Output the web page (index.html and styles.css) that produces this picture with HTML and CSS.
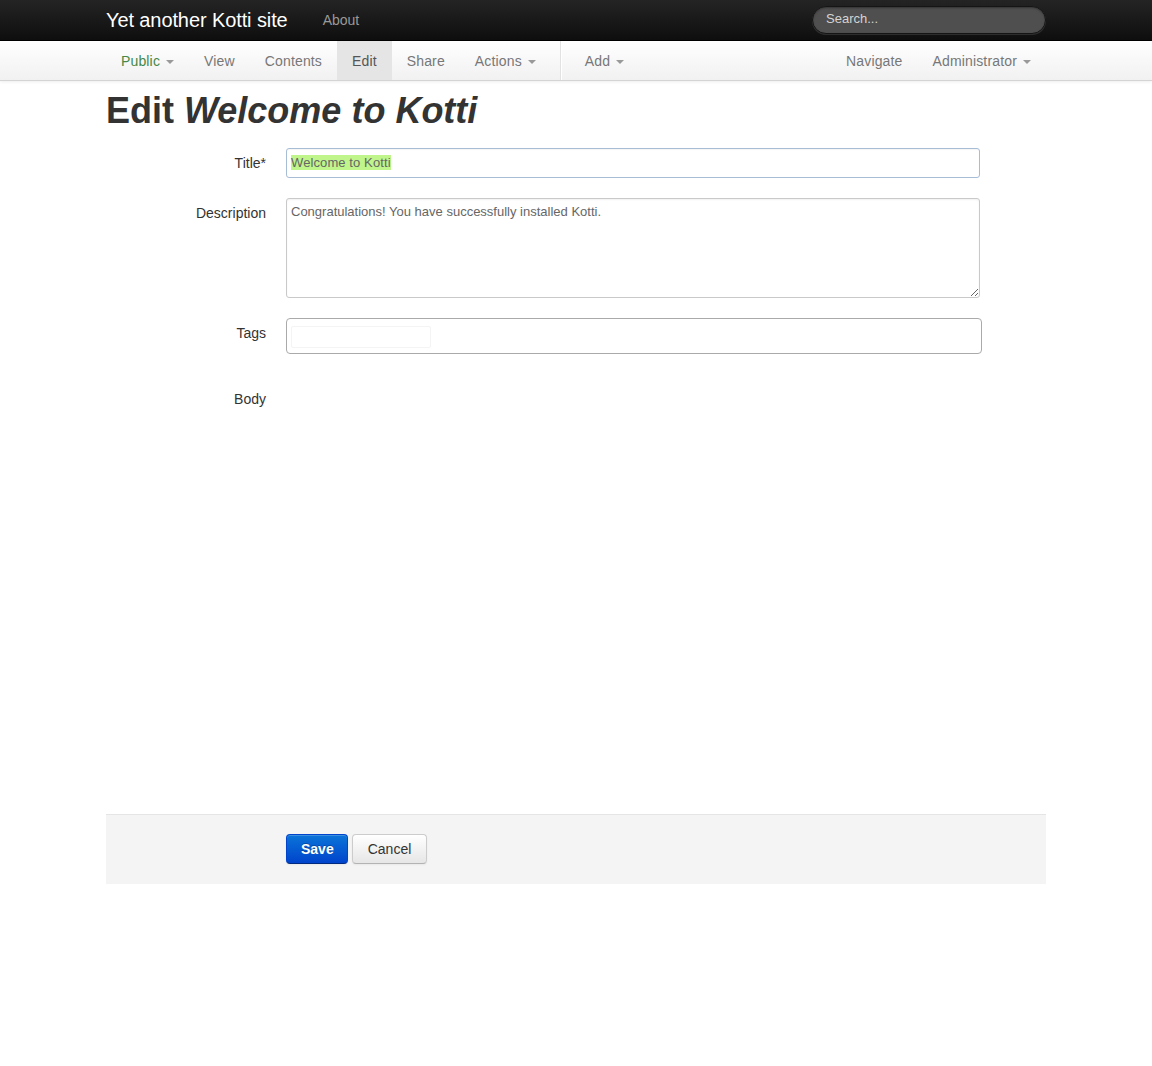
FILE: index.html
```html
<!DOCTYPE html>
<html lang="en">
<head>
<meta charset="utf-8">
<title>Edit Welcome to Kotti</title>
<link rel="stylesheet" href="styles.css">
</head>
<body>
<header class="navbar">
  <div class="container navbar-inner">
    <a class="brand" href="#">Yet another Kotti site</a>
    <ul class="nav">
      <li><a href="#">About</a></li>
    </ul>
    <form class="navbar-search">
      <input class="search-query" type="text" placeholder="Search...">
    </form>
  </div>
</header>

<nav class="subnav">
  <div class="container subnav-inner">
    <ul class="nav">
      <li><a class="state-public" href="#">Public <b class="caret"></b></a></li>
      <li><a href="#">View</a></li>
      <li><a href="#">Contents</a></li>
      <li class="active"><a href="#">Edit</a></li>
      <li><a href="#">Share</a></li>
      <li><a href="#">Actions <b class="caret"></b></a></li>
    </ul>
    <span class="divider-vertical"></span>
    <ul class="nav">
      <li><a href="#">Add <b class="caret"></b></a></li>
    </ul>
    <ul class="nav nav-right">
      <li><a href="#">Navigate</a></li>
      <li><a href="#">Administrator <b class="caret"></b></a></li>
    </ul>
  </div>
</nav>

<main class="container">
  <h1>Edit <em>Welcome to Kotti</em></h1>
  <form class="form-horizontal">
    <div class="control-group">
      <label class="control-label">Title*</label>
      <div class="controls">
        <div class="input title-input"><span class="selected">Welcome to Kotti</span></div>
      </div>
    </div>
    <div class="control-group">
      <label class="control-label">Description</label>
      <div class="controls">
        <textarea class="description" readonly>Congratulations! You have successfully installed Kotti.</textarea>
      </div>
    </div>
    <div class="control-group tags-group">
      <label class="control-label">Tags</label>
      <div class="controls">
        <div class="tagit"><span class="tagit-new"></span></div>
      </div>
    </div>
    <div class="control-group body-group">
      <label class="control-label">Body</label>
      <div class="controls"></div>
    </div>
    <div class="form-actions">
      <button type="button" class="btn btn-primary">Save</button>
      <button type="button" class="btn">Cancel</button>
    </div>
  </form>
</main>
</body>
</html>
```

FILE: styles.css
```css
* { box-sizing: border-box; }

html, body {
  margin: 0;
  padding: 0;
  background: #fff;
}

body {
  font-family: "Liberation Sans", Arial, Helvetica, sans-serif;
  font-size: 14px;
  line-height: 20px;
  color: #333;
}

a { text-decoration: none; }

.container {
  width: 940px;
  margin: 0 auto;
}

/* ---------- top navbar ---------- */
.navbar {
  height: 41px;
  background: linear-gradient(to bottom, #242424, #0e0e0e);
  border-bottom: 1px solid #000;
}

.navbar-inner {
  display: flex;
  align-items: flex-start;
  height: 40px;
}

.brand {
  display: block;
  margin-left: -20px;
  padding: 10px 20px;
  font-size: 20px;
  line-height: 20px;
  color: #fff;
  letter-spacing: -0.1px;
}

.nav {
  display: flex;
  list-style: none;
  margin: 0;
  padding: 0;
}

.nav a {
  display: block;
  padding: 10px 15px;
  line-height: 20px;
  font-size: 14px;
}

.navbar .nav a { color: #999; }

.navbar-search {
  margin: 6px 0 0 auto;
}

.search-query {
  display: block;
  width: 234px;
  height: 28px;
  padding: 2px 13px 6px;
  font-family: "Liberation Sans", Arial, sans-serif;
  font-size: 13px;
  line-height: 18px;
  color: #fff;
  background: #4f4f4f;
  border: 1px solid #151515;
  border-radius: 14px;
  box-shadow: inset 0 1px 2px rgba(0,0,0,.35), 0 1px 0 rgba(255,255,255,.12);
  outline: none;
}

.search-query::placeholder { color: #d4d4d4; }

/* ---------- sub navbar ---------- */
.subnav {
  height: 40px;
  background: linear-gradient(to bottom, #ffffff, #f1f1f1);
  border-bottom: 1px solid #d4d4d4;
  box-shadow: 0 1px 3px rgba(0,0,0,.07);
}

.subnav-inner {
  display: flex;
  height: 39px;
}

.subnav .nav a {
  color: #777;
  height: 39px;
  letter-spacing: 0.15px;
}

.subnav .nav .active a {
  background: #e5e5e5;
  color: #555;
}

.subnav .nav a.state-public { color: #468847; }

.nav-right { margin-left: auto; }

.divider-vertical {
  display: block;
  height: 39px;
  margin: 0 8px 0 9px;
  border-left: 1px solid #e2e2e2;
  border-right: 1px solid #fff;
}

.caret {
  display: inline-block;
  width: 0;
  height: 0;
  vertical-align: top;
  margin-top: 9px;
  margin-left: 2px;
  border-top: 4px solid #999;
  border-left: 4px solid transparent;
  border-right: 4px solid transparent;
}

/* ---------- heading ---------- */
h1 {
  margin: 10px 0 17px;
  font-size: 36px;
  line-height: 40px;
  font-weight: bold;
  color: #333;
}

h1 em { font-style: italic; }

/* ---------- form ---------- */
.form-horizontal { margin: 0; }

.control-group {
  display: grid;
  grid-template-columns: 160px 1fr;
  column-gap: 20px;
  margin-bottom: 20px;
}

.control-label {
  padding-top: 5px;
  text-align: right;
  font-size: 14px;
  line-height: 20px;
  color: #333;
}

.controls { min-width: 0; }

.input {
  width: 694px;
  height: 30px;
  padding: 4px 4px;
  font-size: 13px;
  line-height: 20px;
  color: #666;
  background: #fff;
  border-radius: 3px;
  letter-spacing: 0.1px;
}

.title-input {
  border: 1px solid #a7bdd6;
  box-shadow: inset 0 1px 1px rgba(0,0,0,.04);
}

.selected {
  background: #bff58b;
  color: #666;
}

.description {
  display: block;
  width: 694px;
  height: 100px;
  margin: 0;
  padding: 3px 4px 5px;
  font-family: "Liberation Sans", Arial, sans-serif;
  font-size: 13px;
  line-height: 20px;
  color: #666;
  border: 1px solid #c9c9c9;
  border-radius: 3px;
  box-shadow: inset 0 1px 2px rgba(0,0,0,.06);
  resize: vertical;
  outline: none;
}

.tags-group { margin-bottom: 30px; }

.tagit {
  width: 696px;
  height: 36px;
  padding: 7px 4px;
  background: #fff;
  border: 1px solid #aaa;
  border-radius: 4px;
}

.tagit-new {
  display: block;
  width: 140px;
  height: 22px;
  border: 1px solid #f4f4f4;
  border-radius: 2px;
}

.body-group { height: 410px; }

.form-actions {
  display: flex;
  gap: 4px;
  margin: 0;
  padding: 19px 20px 20px 180px;
  background: #f4f4f4;
  border-top: 1px solid #e5e5e5;
}

.btn {
  display: inline-block;
  height: 30px;
  padding: 4px 15px;
  font-family: "Liberation Sans", Arial, sans-serif;
  font-size: 14px;
  line-height: 20px;
  color: #333;
  background: linear-gradient(to bottom, #ffffff, #e6e6e6);
  border: 1px solid #cccccc;
  border-bottom-color: #b3b3b3;
  border-radius: 4px;
  box-shadow: inset 0 1px 0 rgba(255,255,255,.2), 0 1px 2px rgba(0,0,0,.05);
  cursor: pointer;
}

.btn-primary {
  padding: 4px 13px 4px 14px;
  color: #fff;
  font-weight: bold;
  background: linear-gradient(to bottom, #0a74d8, #0044cc);
  border-color: #0044cc #0044cc #002a80;
  text-shadow: 0 -1px 0 rgba(0,0,0,.25);
}
```
